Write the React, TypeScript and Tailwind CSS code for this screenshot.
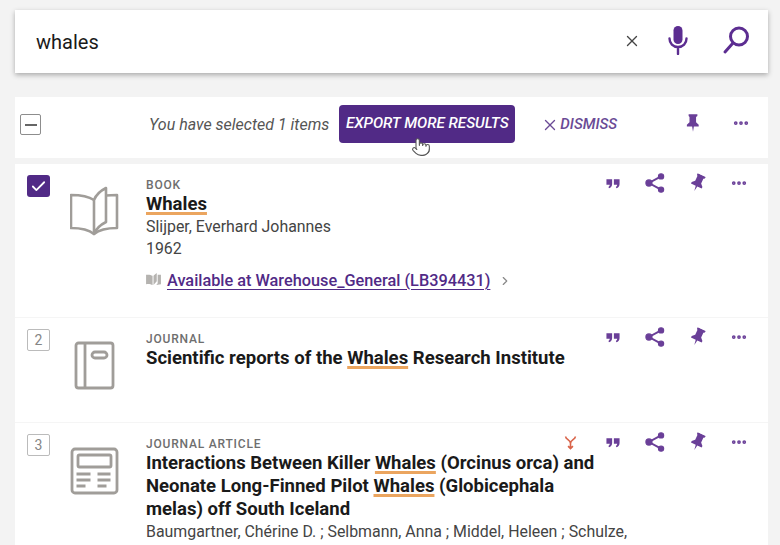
import { Check, ChevronRight, MoreHorizontal, Pointer, X } from "lucide-react";
import type { ReactNode } from "react";

const PURPLE = "#512a86";

function Hl({ children }: { children: ReactNode }) {
  return (
    <span className="underline decoration-[#eba55f] decoration-[3px] underline-offset-[2px] [text-decoration-skip-ink:none]">
      {children}
    </span>
  );
}

function Pin({ className }: { className?: string }) {
  return (
    <svg viewBox="0 0 16 20" className={className} fill="currentColor">
      <path d="M3 0h10v2l-1.500 1v6l3 3v2H9l-1 6-1-6H1v-2l3-3V3L3 2z" />
    </svg>
  );
}

function Actions({ extra }: { extra?: boolean }) {
  return (
    <div className="flex items-center text-[#6a3f98] h-[22px] -mt-[2px]">
      {extra && (
        <svg viewBox="0 0 16 18" className="w-[13px] h-[15px] mr-[29px] text-[#d9644a]" fill="none" stroke="currentColor" strokeWidth="2">
          <path d="M2 1.500c0 4 6 4 6 8.500c0-4.500 6-4.500 6-8.500M8 10v6M5 13.500l3 3 3-3" />
        </svg>
      )}
      <svg viewBox="0 0 16 12" className="w-[14px] h-[11px]" fill="currentColor">
        <path d="M0.500 1h6.500v5.500c0 2.500-1.500 4.200-3.600 4.800l-.6-1.300c.9-.5 1.400-1.200 1.500-2.500H0.500zM9 1h6.500v5.500c0 2.500-1.500 4.200-3.600 4.800l-.6-1.300c.9-.5 1.400-1.200 1.500-2.500H9z" />
      </svg>
      <svg viewBox="0 0 20 20" className="w-[22px] h-[22px] ml-[24px]" fill="currentColor" stroke="currentColor">
        <path d="M15.500 4L4.500 10l11 6" fill="none" strokeWidth="1.800" />
        <circle cx="15.500" cy="4" r="2.400" />
        <circle cx="4.500" cy="10" r="2.800" />
        <circle cx="15.500" cy="16" r="2.400" />
      </svg>
      <Pin className="w-[14px] h-[18px] ml-[25px] rotate-[25deg]" />
      <MoreHorizontal className="w-[18px] h-[18px] ml-[25px]" strokeWidth={3} />
    </div>
  );
}

function BookIcon() {
  return (
    <svg viewBox="0 0 50 50" className="w-[50px] h-[50px]" fill="none" stroke="#a09d99" strokeWidth="2.600" strokeLinejoin="round">
      <path d="M24 14C18 10 11 9 1 9v33c10 0 17 1 23 6c6-5 13-6 23-6V9c-4 0-7 0-11 .5" />
      <path d="M24 14v34c2-5 6-9 12-12V2c-6 3-10 7-12 12z" />
    </svg>
  );
}

function JournalIcon() {
  return (
    <svg viewBox="0 0 50 50" className="w-[50px] h-[50px]" fill="none" stroke="#a09d99" strokeWidth="2.800" strokeLinejoin="round">
      <rect x="6" y="3" width="37" height="45" rx="2.500" />
      <path d="M15 3v45" />
      <rect x="22" y="12" width="15" height="6" rx="3" />
    </svg>
  );
}

function ArticleIcon() {
  return (
    <svg viewBox="0 0 50 50" className="w-[50px] h-[50px]" fill="none" stroke="#a09d99" strokeWidth="2.800" strokeLinejoin="round">
      <rect x="2" y="4" width="45" height="44" rx="3" />
      <rect x="8" y="10" width="33" height="12" rx="1.500" />
      <path d="M6.500 29h14M27.500 29h13M6.500 35h14M27.500 35h13M6.500 41h9M27.500 41h9" />
    </svg>
  );
}

function NumberBox({ n }: { n: number }) {
  return (
    <div className="w-[23px] h-[22px] border border-[#bbbbbb] rounded-[2px] flex items-center justify-center text-[14px] text-[#858585]">
      {n}
    </div>
  );
}

function Row({
  mark,
  icon,
  label,
  extra,
  height,
  children,
}: {
  mark: ReactNode;
  icon: ReactNode;
  label: string;
  extra?: boolean;
  height: string;
  children: ReactNode;
}) {
  return (
    <div className={`flex bg-white pl-3 pr-[20px] pt-[10px] ${height}`}>
      <div className="w-[23px] pt-px shrink-0">{mark}</div>
      <div className="w-[50px] ml-[20px] mt-[12px] shrink-0">{icon}</div>
      <div className="ml-[26px] flex-1 min-w-0">
        <div className="flex justify-between">
          <span className="text-[12px] font-medium tracking-[0.8px] text-[#6e6e6e] leading-[22px]">{label}</span>
          <Actions extra={extra} />
        </div>
        {children}
      </div>
    </div>
  );
}

export default function App() {
  return (
    <div className="h-[545px] overflow-hidden bg-[#f3f3f3] pl-[15px] pr-3 pt-[10px] text-[#333] font-['Roboto',sans-serif]">
      <div className="flex items-center h-[63px] bg-white shadow-[0_2px_5px_rgba(0,0,0,0.3)] pl-[21px] pr-[18px]">
        <span className="text-[20px] text-[#1a1a1a] flex-1">whales</span>
        <X className="w-[18px] h-[18px] text-[#444] -mt-[2px]" strokeWidth={1.800} />
        <svg viewBox="0 0 24 30" className="w-[24px] h-[30px] ml-[25px] -mt-[4px] text-[#5c2d91]" fill="none" stroke="currentColor" strokeWidth="2.400">
          <rect x="7.500" y="1" width="9" height="18" rx="4.500" fill="currentColor" stroke="none" />
          <path d="M3.500 13.500c0 5 3.500 8.500 8.500 8.500s8.500-3.500 8.500-8.500M12 22v7" strokeLinecap="round" />
        </svg>
        <svg viewBox="0 0 28 30" className="w-[28px] h-[30px] ml-[32px] -mt-[4px] text-[#5c2d91]" fill="none" stroke="currentColor" strokeWidth="3">
          <circle cx="17" cy="11.500" r="8.500" />
          <path d="M11 18L3 27" strokeLinecap="round" />
        </svg>
      </div>

      <div className="relative flex items-center h-[61px] mt-6 bg-white pl-[5px] pb-[6px]">
        <div className="w-[21px] h-[21px] border border-[#8d8d8d] rounded-[2px] flex items-center justify-center">
          <div className="w-[12px] h-[2px] bg-[#666]" />
        </div>
        <span className="ml-[108px] text-[16px] italic text-[#555]">You have selected 1 items</span>
        <button className="ml-[10px] w-[176px] h-[38px] -mt-[2px] rounded-[4px] text-white text-[15.200px] font-medium italic" style={{ backgroundColor: PURPLE }}>
          EXPORT MORE RESULTS
        </button>
        <span className="ml-[26px] flex items-center text-[#6a4a95] text-[15px] font-medium italic">
          <X className="w-[18px] h-[18px] mr-[1px]" strokeWidth={1.800} />
          DISMISS
        </span>
        <Pin className="w-[14px] h-[18px] ml-[69px] -mt-[3px] text-[#6a3f98]" />
        <MoreHorizontal className="w-[18px] h-[18px] ml-[32px] -mt-[3px] text-[#6a3f98]" strokeWidth={3} />
        <Pointer className="absolute left-[396px] top-[39px] w-[20px] h-[22px] text-[#555] fill-white" strokeWidth={1.300} />
      </div>

      <div className="mt-[6px] flex flex-col gap-px bg-[#f5f5f5]">
        <Row
          height="h-[153px]"
          label="BOOK"
          mark={
            <div className="w-[23px] h-[22px] rounded-[3px] bg-[#512a86] flex items-center justify-center">
              <Check className="w-[17px] h-[17px] text-white" strokeWidth={2.500} />
            </div>
          }
          icon={<BookIcon />}
        >
          <div className="text-[18.550px] font-bold leading-[23px] -mt-[3px] text-[#1a1a1a]">
            <Hl>Whales</Hl>
          </div>
          <div className="text-[15.900px] leading-[22px] text-[#444]">Slijper, Everhard Johannes</div>
          <div className="text-[15.900px] leading-[22px] text-[#444]">1962</div>
          <div className="flex items-center mt-[9px] text-[16.300px]">
            <svg viewBox="0 0 16 14" className="w-[15px] h-[13px] -mt-[3px]" fill="#b5b3b0">
              <path d="M0 2c3-.5 5 0 7 1v10c-2-1-4-1.500-7-1zM8 3c.8-1 2-2 3.500-3v9L8 13zM12.500 2H16v10l-5 1 1.500-2z" />
            </svg>
            <span className="ml-[6px] text-[#512a86] font-medium underline underline-offset-[3px]">
              Available at Warehouse_General (LB394431)
            </span>
            <ChevronRight className="w-[14px] h-[14px] ml-2 text-[#888]" />
          </div>
        </Row>
        <Row height="h-[104px]" label="JOURNAL" mark={<NumberBox n={2} />} icon={<JournalIcon />}>
          <div className="text-[18.550px] font-bold leading-[23px] -mt-[3px] text-[#1a1a1a]">
            Scientific reports of the <Hl>Whales</Hl> Research Institute
          </div>
        </Row>
        <Row height="h-[140px]" label="JOURNAL ARTICLE" extra mark={<NumberBox n={3} />} icon={<ArticleIcon />}>
          <div className="text-[18.550px] font-bold leading-[23px] -mt-[3px] text-[#1a1a1a] max-w-[455px]">
            Interactions Between Killer <Hl>Whales</Hl> (Orcinus orca) and Neonate Long-Finned Pilot <Hl>Whales</Hl> (Globicephala
            melas) off South Iceland
          </div>
          <div className="text-[15.900px] leading-[22px] text-[#444] whitespace-nowrap">
            Baumgartner, Chérine D. ; Selbmann, Anna ; Middel, Heleen ; Schulze,
          </div>
        </Row>
      </div>
    </div>
  );
}
